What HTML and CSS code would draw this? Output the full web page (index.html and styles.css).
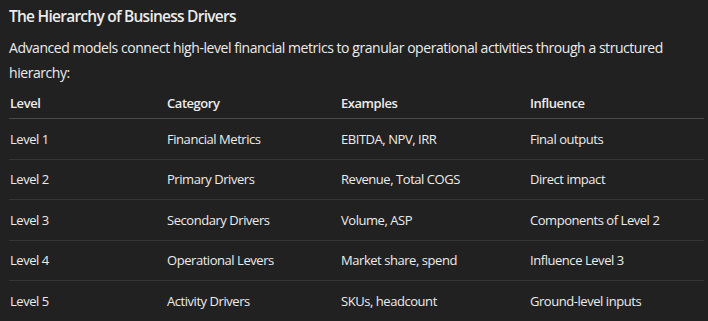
FILE: index.html
```html
<!DOCTYPE html>
<html>
<head>
<meta charset="utf-8">
<link rel="stylesheet" href="styles.css">
</head>
<body>
<div class="doc">
  <h3 class="title">The Hierarchy of Business Drivers</h3>
  <p class="intro">Advanced models connect high-level financial metrics to granular operational activities through a structured hierarchy:</p>
  <table class="grid">
    <thead>
      <tr><th class="c1">Level</th><th class="c2">Category</th><th class="c3">Examples</th><th class="c4">Influence</th></tr>
    </thead>
    <tbody>
      <tr><td>Level 1</td><td>Financial Metrics</td><td>EBITDA, NPV, IRR</td><td>Final outputs</td></tr>
      <tr><td>Level 2</td><td>Primary Drivers</td><td>Revenue, Total COGS</td><td>Direct impact</td></tr>
      <tr><td>Level 3</td><td>Secondary Drivers</td><td>Volume, ASP</td><td>Components of Level 2</td></tr>
      <tr><td>Level 4</td><td>Operational Levers</td><td>Market share, spend</td><td>Influence Level 3</td></tr>
      <tr><td>Level 5</td><td>Activity Drivers</td><td>SKUs, headcount</td><td>Ground-level inputs</td></tr>
    </tbody>
  </table>
</div>
</body>
</html>
```
FILE: styles.css
```css
html, body {
  margin: 0;
  padding: 0;
  background: #212121;
}
body {
  font-family: "Open Sans", "Noto Sans", sans-serif;
  color: #ececec;
}
.doc {
  padding: 4px 8px 0 9px;
}
.title {
  margin: 0;
  font-size: 15.5px;
  font-weight: 600;
  line-height: 24px;
  letter-spacing: -0.75px;
}
.intro {
  margin: 7px 0 0 0;
  font-size: 14px;
  line-height: 25px;
  letter-spacing: -0.45px;
}
.grid {
  margin-top: 6px;
  width: 691px;
  border-collapse: collapse;
  table-layout: fixed;
  font-size: 13px;
  letter-spacing: -0.45px;
}
.grid th {
  text-align: left;
  font-weight: 600;
  padding: 2px 0 5px 1px;
  border-bottom: 1px solid #4a4a4a;
  line-height: 20px;
}
.grid td {
  padding: 0 0 0 1px;
  height: 39.5px;
  border-bottom: 1px solid #363636;
  line-height: 20px;
}
.grid tbody tr:last-child td {
  border-bottom: none;
}
.c1 { width: 156px; }
.c2 { width: 173px; }
.c3 { width: 188px; }
.c4 { width: 174px; }
```
